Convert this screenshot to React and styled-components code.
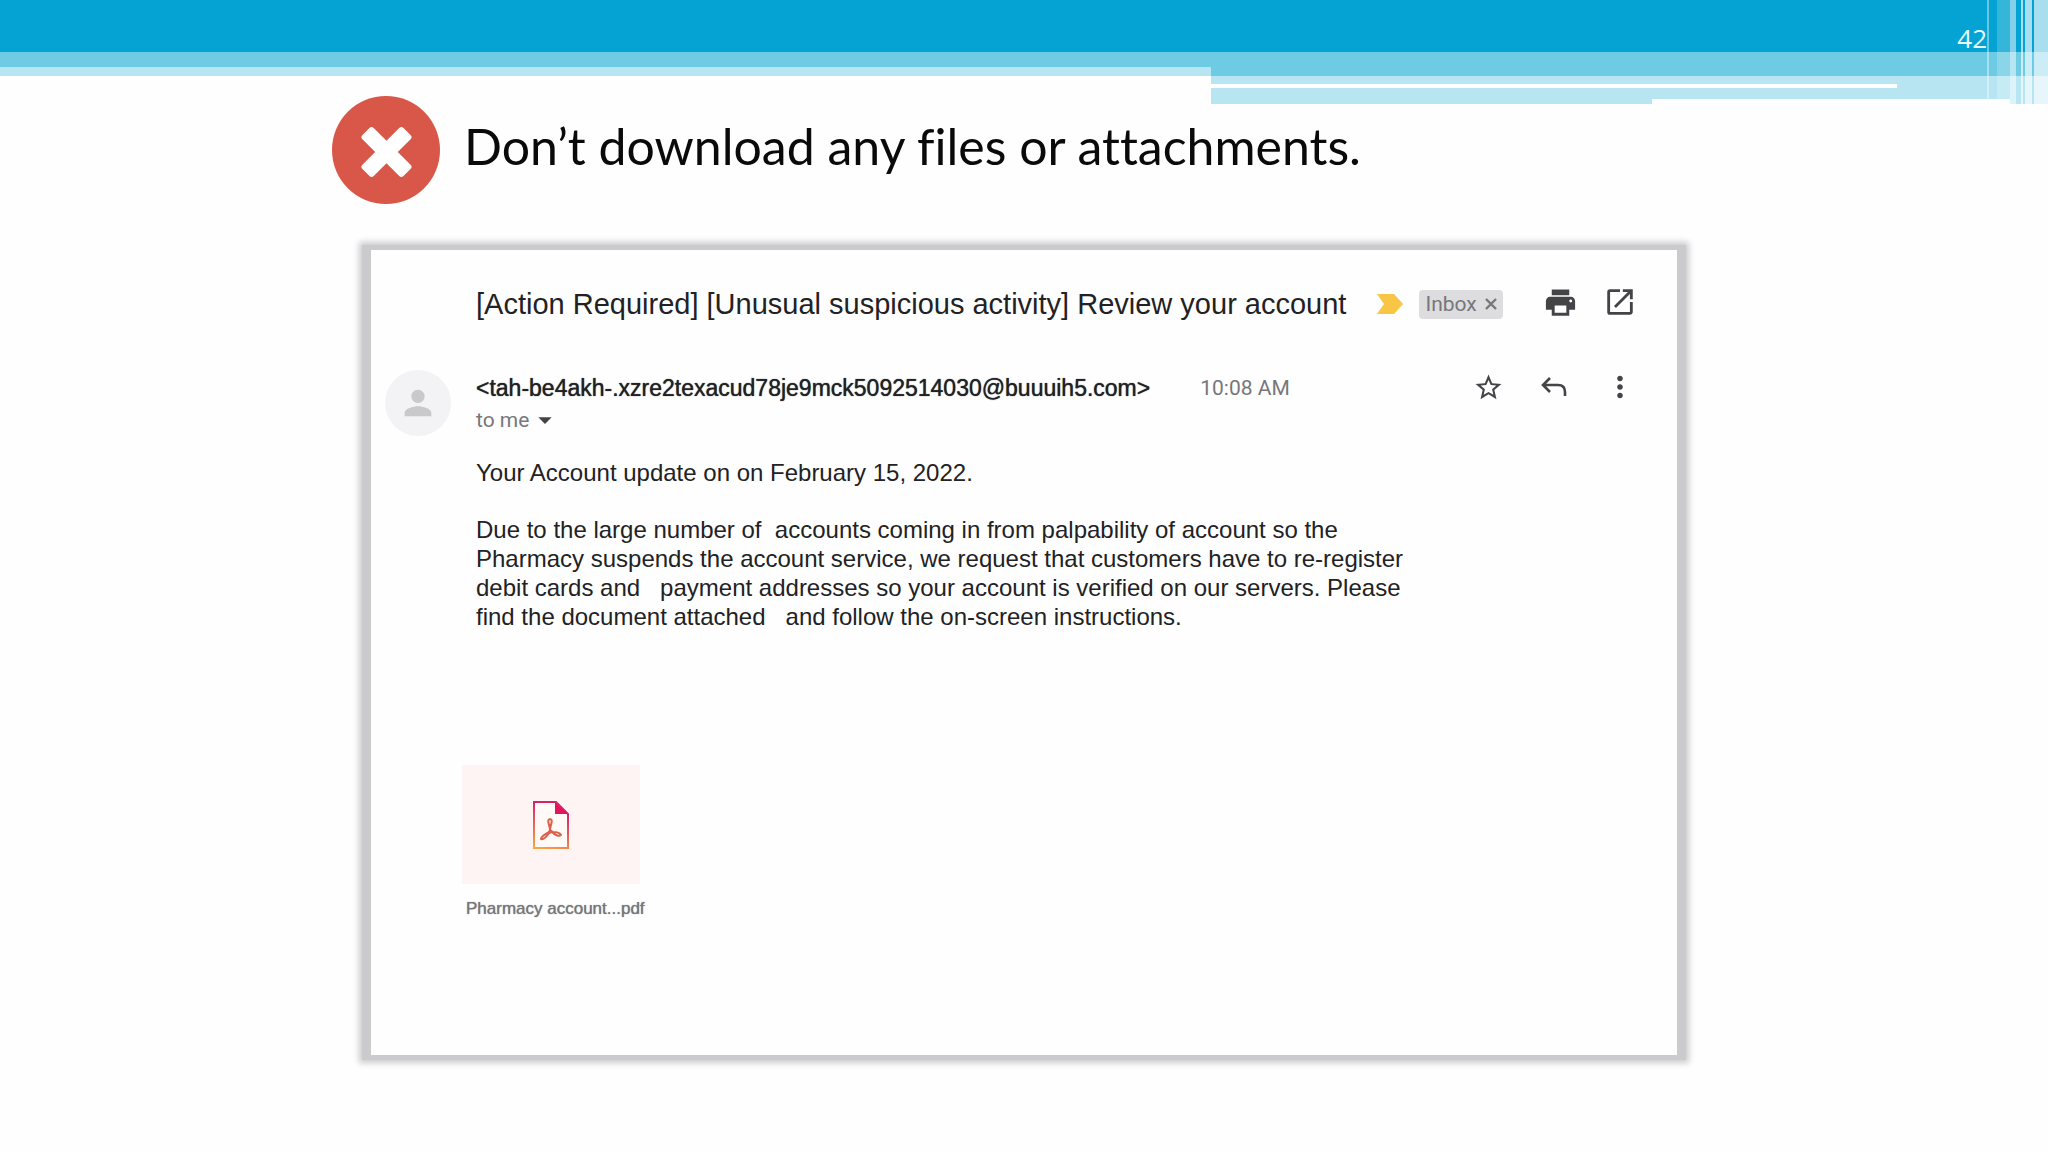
import React from "react";
import styled, { createGlobalStyle } from "styled-components";
import {
	MdArrowDropDown,
	MdMoreVert,
	MdOpenInNew,
	MdPerson,
	MdPrint,
	MdStarBorder,
} from "react-icons/md";

const colors = {
	blue: "#04a3d3",
	midBlue: "#6dcce3",
	paleBlue: "#b7e6f2",
	red: "#d95748",
	frame: "#cbcacd",
	ink: "#222224",
	gray: "#77777a",
	icon: "#444448",
};

const sans = `"Liberation Sans", Arial, sans-serif`;
const roboto = `Roboto, "Liberation Sans", sans-serif`;

const GlobalStyle = createGlobalStyle`
	* {
		box-sizing: border-box;
	}

	body {
		margin: 0;
		background: #fefefe;
		color: ${colors.ink};
		font-family: ${sans};
	}

	h1, h2, p, figure {
		margin: 0;
		font-weight: 400;
	}
`;

const Banner = styled.header`
	position: relative;
	height: 104px;
`;

const BannerTop = styled.div`
	display: flex;
	justify-content: flex-end;
	height: 52px;
	padding: 23px 61px 0 0;
	background: ${colors.blue};
`;

const PageNumber = styled.span`
	color: #e6fbff;
	font-family: "Open Sans", "Noto Sans", sans-serif;
	font-size: 26px;
	line-height: 30px;
`;

const BannerSteps = styled.div`
	display: grid;
	grid-template-columns: 1211fr 837fr;
	align-items: start;
`;

const Strip = styled.div`
	width: ${({ $width }) => $width || "100%"};
	height: ${({ $height }) => $height}px;
	background: ${({ $color }) => $color};
`;

const StripRow = styled.div`
	background: ${colors.paleBlue};
`;

const StripEnd = styled.div`
	display: grid;
	grid-template-columns: 441fr 358fr 38px;
	height: 5px;

	& > * {
		background: ${colors.paleBlue};
	}

	& > :nth-child(2) {
		background: #fefefe;
	}
`;

const Stripes = styled.div`
	position: absolute;
	top: 0;
	right: 0;
	display: flex;
	height: 104px;
`;

const Stripe = styled.div`
	width: ${({ $width }) => $width}px;
	background: rgba(255, 255, 255, ${({ $alpha }) => $alpha});
`;

const Slide = styled.main`
	width: 100%;
	max-width: 1384px;
	margin: 0 auto;
	padding-bottom: 40px;
`;

const TitleRow = styled.div`
	display: flex;
	align-items: center;
	gap: 24px;
	height: 92px;
`;

const Title = styled.h1`
	padding-bottom: 8px;
	color: #0a0a0a;
	font-family: Lato, "Open Sans", sans-serif;
	font-size: 50px;
	font-variant-ligatures: none;
	line-height: 60px;
`;

const Frame = styled.div`
	margin: 49px 30px 0;
	padding: 5px 9px;
	background: ${colors.frame};
	box-shadow: 0 0 6px 3px ${colors.frame};
`;

const Mail = styled.article`
	display: grid;
	grid-template-columns: 66px 1fr;
	column-gap: 25px;
	align-content: start;
	min-height: 805px;
	padding: 32px 39px 0 14px;
	background: #fefefe;
`;

const SubjectRow = styled.div`
	grid-column: 2;
	display: flex;
	align-items: center;
	height: 44px;
`;

const Subject = styled.h2`
	margin-right: 31px;
	font-size: 29px;
	line-height: 36px;
`;

const Chip = styled.span`
	display: flex;
	align-items: center;
	gap: 8px;
	height: 29px;
	margin-left: 16px;
	padding: 0 6px;
	border-radius: 4px;
	background: #dddcde;
	color: ${colors.gray};
	font-family: ${roboto};
	font-size: 21px;
`;

const PlainButton = styled.button`
	display: flex;
	align-items: center;
	justify-content: center;
	padding: 0;
	border: 0;
	background: transparent;
	color: ${({ $color }) => $color || colors.icon};
	cursor: pointer;
`;

const Actions = styled.div`
	display: flex;
	gap: 24px;
	margin-left: auto;
	padding-bottom: 4px;

	button {
		width: 36px;
		height: 36px;
	}
`;

const MessageActions = styled(Actions)`
	gap: 30px;
	padding-bottom: 2px;
`;

const Avatar = styled.div`
	display: flex;
	align-items: center;
	justify-content: center;
	width: 66px;
	height: 66px;
	margin-top: 44px;
	border-radius: 50%;
	background: #f3f2f4;
	color: #c9c8ca;
`;

const Message = styled.div`
	padding-top: 44px;
`;

const SenderRow = styled.div`
	display: flex;
	align-items: center;
	height: 36px;
`;

const Sender = styled.span`
	font-size: 23px;
	text-shadow: 0 0 1px ${colors.ink};
`;

const Time = styled.time`
	margin-left: 50px;
	color: ${colors.gray};
	font-family: ${roboto};
	font-size: 21px;
`;

const Recipient = styled(PlainButton)`
	height: 28px;
	font-family: ${roboto};
	font-size: 21px;
`;

const Body = styled.div`
	max-width: 960px;
	margin-top: 24px;
	font-size: 24px;
	line-height: 29px;
	white-space: pre-wrap;

	p + p {
		margin-top: 28px;
	}
`;

const Attachment = styled.figure`
	width: 178px;
	margin: 134px 0 0 -14px;
`;

const Thumb = styled.a`
	display: flex;
	align-items: center;
	justify-content: center;
	height: 119px;
	background: #fef4f3;
`;

const FileName = styled.figcaption`
	margin-top: 15px;
	padding-left: 4px;
	color: ${colors.gray};
	font-size: 17px;
	line-height: 20px;
	white-space: nowrap;
	text-shadow: 0 0 1px ${colors.gray};
`;

const stripes = [
	{ width: 2, alpha: 0.4 },
	{ width: 8, alpha: 0 },
	{ width: 13, alpha: 0.2 },
	{ width: 6, alpha: 0.5 },
	{ width: 5, alpha: 0 },
	{ width: 2, alpha: 0.65 },
	{ width: 2, alpha: 0 },
	{ width: 7, alpha: 0.65 },
	{ width: 2, alpha: 0 },
	{ width: 14, alpha: 0.65 },
];

const CrossBadge = () => (
	<svg width="108" height="108" viewBox="0 0 108 108" aria-hidden="true">
		<circle cx="54" cy="54" r="54" fill={colors.red} />
		<g transform="translate(54.5 56)" fill="#fff">
			<rect x="-29" y="-8" width="58" height="16" rx="3" transform="rotate(45)" />
			<rect x="-29" y="-8" width="58" height="16" rx="3" transform="rotate(-45)" />
		</g>
	</svg>
);

const Importance = () => (
	<svg width="26" height="20" viewBox="0 0 26 20" aria-hidden="true">
		<path d="M0 0H17L26 10L17 20H0L7 10Z" fill="#f8c545" />
	</svg>
);

const ReplyIcon = () => (
	<svg width="26" height="22" viewBox="0 0 26 22" fill="none" aria-hidden="true">
		<path
			d="M9 2L2 9L9 16M2 9H17Q24 9 24 16V20"
			stroke="currentColor"
			strokeWidth="2.6"
		/>
	</svg>
);

const PdfIcon = () => (
	<svg width="36" height="48" viewBox="0 0 36 48" fill="none" aria-hidden="true">
		<defs>
			<linearGradient id="pdf" x1="26" y1="0" x2="8" y2="48" gradientUnits="userSpaceOnUse">
				<stop offset="0.2" stopColor="#d6246a" />
				<stop offset="1" stopColor="#f9a640" />
			</linearGradient>
		</defs>
		<path d="M1 1H23L35 13V47H1Z" fill="#fffaf8" stroke="url(#pdf)" strokeWidth="2" />
		<path d="M22 1L35 13H22Z" fill="#e4145c" />
		<path
			d="M17 29C17 24 13 19 17 18C21 19 17 24 17 29L20 31C24 31 27 32 28 34C25 36 21 33 19 31L16 32C14 35 11 39 8 38C8 35 13 33 16 31Z"
			stroke="#dd6048"
			strokeWidth="2"
			strokeLinejoin="round"
		/>
	</svg>
);

const App = () => {
	return (
		<>
			<GlobalStyle />
			<Banner>
				<BannerTop>
					<PageNumber>42</PageNumber>
				</BannerTop>
				<BannerSteps>
					<div>
						<Strip $height={15} $color={colors.midBlue} />
						<Strip $height={9} $color={colors.paleBlue} />
					</div>
					<div>
						<Strip $height={24} $color={colors.midBlue} />
						<Strip $height={8} $color={colors.paleBlue} />
						<StripRow>
							<Strip $height={4} $width="82%" $color="#fff" />
						</StripRow>
						<Strip $height={11} $color={colors.paleBlue} />
						<StripEnd>
							<div />
							<div />
							<div />
						</StripEnd>
					</div>
				</BannerSteps>
				<Stripes>
					{stripes.map(({ width, alpha }, i) => (
						<Stripe key={i} $width={width} $alpha={alpha} />
					))}
				</Stripes>
			</Banner>
			<Slide>
				<TitleRow>
					<CrossBadge />
					<Title>Don’t download any files or attachments.</Title>
				</TitleRow>
				<Frame>
					<Mail>
						<SubjectRow>
							<Subject>
								[Action Required] [Unusual suspicious activity] Review your account
							</Subject>
							<Importance />
							<Chip>
								Inbox
								<PlainButton aria-label="Remove label" $color={colors.gray}>
									<svg width="12" height="12" viewBox="0 0 12 12" aria-hidden="true">
										<path d="M1 1L11 11M11 1L1 11" stroke="currentColor" strokeWidth="2.4" />
									</svg>
								</PlainButton>
							</Chip>
							<Actions>
								<PlainButton aria-label="Print">
									<MdPrint size={35} />
								</PlainButton>
								<PlainButton aria-label="Open in new window">
									<MdOpenInNew size={34} />
								</PlainButton>
							</Actions>
						</SubjectRow>
						<Avatar>
							<MdPerson size={40} />
						</Avatar>
						<Message>
							<SenderRow>
								<Sender>{"<tah-be4akh-.xzre2texacud78je9mck5092514030@buuuih5.com>"}</Sender>
								<Time>10:08 AM</Time>
								<MessageActions>
									<PlainButton aria-label="Star">
										<MdStarBorder size={31} />
									</PlainButton>
									<PlainButton aria-label="Reply">
										<ReplyIcon />
									</PlainButton>
									<PlainButton aria-label="More">
										<MdMoreVert size={34} />
									</PlainButton>
								</MessageActions>
							</SenderRow>
							<Recipient $color={colors.gray}>
								to me
								<MdArrowDropDown size={32} color={colors.icon} />
							</Recipient>
							<Body>
								<p>Your Account update on on February 15, 2022.</p>
								<p>
									{"Due to the large number of  accounts coming in from palpability of account so the\n"}
									{"Pharmacy suspends the account service, we request that customers have to re-register\n"}
									{"debit cards and   payment addresses so your account is verified on our servers. Please\n"}
									{"find the document attached   and follow the on-screen instructions."}
								</p>
							</Body>
							<Attachment>
								<Thumb href="#pdf" aria-label="Open attachment">
									<PdfIcon />
								</Thumb>
								<FileName>Pharmacy account...pdf</FileName>
							</Attachment>
						</Message>
					</Mail>
				</Frame>
			</Slide>
		</>
	);
};

export default App;
